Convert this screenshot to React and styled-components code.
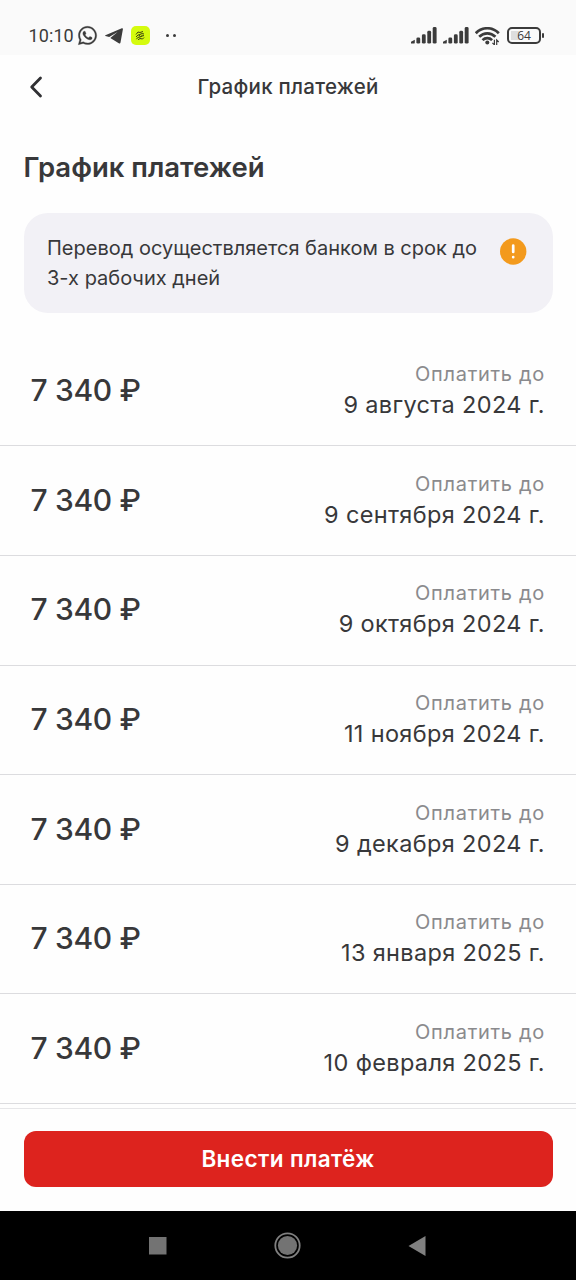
import React from 'react';
import styled, { createGlobalStyle } from 'styled-components';
import { FaWhatsapp } from 'react-icons/fa';

const payments = [
    { amount: '7 340 ₽', date: '9 августа 2024 г.' },
    { amount: '7 340 ₽', date: '9 сентября 2024 г.' },
    { amount: '7 340 ₽', date: '9 октября 2024 г.' },
    { amount: '7 340 ₽', date: '11 ноября 2024 г.' },
    { amount: '7 340 ₽', date: '9 декабря 2024 г.' },
    { amount: '7 340 ₽', date: '13 января 2025 г.' },
    { amount: '7 340 ₽', date: '10 февраля 2025 г.' },
]

const SignalIcon = () => (
    <svg width="26" height="17" viewBox="0 0 26 17" fill="#3b3b3b">
        <path d="M0 16.600v-1.800l3.800-2v2.600q0 1.200-1.200 1.200z" />
        <rect x="5.400" y="10.400" width="3.800" height="6.200" rx="1.400" />
        <rect x="10.900" y="7.300" width="3.800" height="9.300" rx="1.400" />
        <rect x="16.300" y="3.800" width="3.800" height="12.800" rx="1.400" />
        <rect x="21.700" y="0" width="3.900" height="16.600" rx="1.400" />
    </svg>
)

const WifiIcon = () => (
    <svg width="25" height="18" viewBox="0 0 25 18" fill="none" stroke="#3b3b3b" strokeWidth="2.700">
        <path d="M.8 6.200C7.300 -.4 17.300 -.4 23.800 6.200" />
        <path d="M4.200 9.800C8.900 5.200 15.700 5.200 20.400 9.800" />
        <path d="M7.500 13.100c2.700-2.600 6.900-2.600 9.600 0" />
        <circle cx="12.300" cy="15.500" r="2" fill="#3b3b3b" stroke="none" />
        <path d="M19.400 12.800v5l-2-2M21.700 18v-5l2 2" strokeWidth="1.200" />
    </svg>
)

const App = () => {
    return (
        <Screen>
            <GlobalStyle />
            <StatusBar>
                <Clock>10:10</Clock>
                <FaWhatsapp size={21} stroke="#3b3b3b" strokeWidth={8} />
                <PlaneIcon width="18" height="16" viewBox="0 0 18 16" fill="#3b3b3b">
                    <path d="M.4 7.200 16.800.3c.8-.3 1.300.1 1.100 1L15.500 14.600c-.2 1-.9 1.200-1.700.7L5.300 10.100 12.600 4 4.200 9 .4 8c-.4-.2-.4-.6 0-.8z" />
                </PlaneIcon>
                <AppBadge>
                    <svg width="10" height="11" viewBox="0 0 10 11" fill="none" stroke="#3f4612" strokeWidth="1">
                        <path d="M1 4.500 3 2l2 .5L8 1.500M1 7l2-2 2-.5 1.500-1L9 4M6 4.500 7.500 6 9 5.500M1.500 9.200l1.200-1.700L5 7l2.500-1M3 9.800l2-1.300L7.500 9 9 7.500M4 5l1.500 2" />
                    </svg>
                </AppBadge>
                <Dots><Dot /><Dot /></Dots>
                <StatusRight>
                    <SignalIcon />
                    <SignalIcon />
                    <WifiIcon />
                    <Battery>
                        <BatteryBody><BatteryFill /><BatteryText>64</BatteryText></BatteryBody>
                        <BatteryTip />
                    </Battery>
                </StatusRight>
            </StatusBar>

            <Header>
                <BackButton>
                    <svg width="14" height="22" viewBox="0 0 14 22" fill="none" stroke="#303033" strokeWidth="2.800" strokeLinecap="round" strokeLinejoin="round">
                        <path d="M11.500 2 2.700 11 11.500 20" />
                    </svg>
                </BackButton>
                <HeaderTitle>График платежей</HeaderTitle>
            </Header>

            <Title>График платежей</Title>

            <Notice>
                <NoticeText>
                    Перевод осуществляется банком в срок до<br />3-х рабочих дней
                </NoticeText>
                <svg width="27" height="27" viewBox="0 0 27 27">
                    <circle cx="13.200" cy="13.500" r="13.200" fill="#f39a1d" />
                    <path d="M13.200 7.500v6.500M13.200 19.100v.1" stroke="#fff" strokeWidth="2.700" strokeLinecap="round" />
                </svg>
            </Notice>

            <List>
                {payments.map((item) => (
                    <Row key={item.date}>
                        <Amount>{item.amount}</Amount>
                        <Due>
                            <DueLabel>Оплатить до</DueLabel>
                            <DueDate>{item.date}</DueDate>
                        </Due>
                    </Row>
                ))}
            </List>

            <Footer>
                <PayButton>Внести платёж</PayButton>
            </Footer>

            <NavBar>
                <svg width="18" height="18"><rect width="17.500" height="17.500" fill="#737373" /></svg>
                <svg width="27" height="27" viewBox="0 0 27 27">
                    <circle cx="13.500" cy="13.500" r="12.200" fill="none" stroke="#808080" strokeWidth="1.800" />
                    <circle cx="13.500" cy="13.500" r="9.600" fill="#737373" />
                </svg>
                <svg width="18" height="20" viewBox="0 0 18 20"><path d="M.5 10 17.500 0v20z" fill="#808080" /></svg>
            </NavBar>
        </Screen>
    )
}

const GlobalStyle = createGlobalStyle`
    * {
        box-sizing: border-box;
    }

    body {
        margin: 0;
        background: #fff;
    }

    svg {
        display: block;
        flex-shrink: 0;
    }
`

const Screen = styled.div`
    display: flex;
    flex-direction: column;
    width: 576px;
    height: 1280px;
    overflow: hidden;
    background: #fefefe;
    color: #38383a;
    font-family: Inter, 'Noto Sans', sans-serif;
`

const StatusBar = styled.div`
    display: flex;
    align-items: center;
    height: 55px;
    padding: 16px 32px 0 28.5px;
    background: #fafafa;
    color: #3b3b3b;
`

const Clock = styled.span`
    width: 48px;
    font: 400 18px/20px Roboto, sans-serif;
    letter-spacing: 0.1px;
`

const PlaneIcon = styled.svg`
    margin-left: 7.5px;
`

const AppBadge = styled.div`
    display: flex;
    align-items: center;
    justify-content: center;
    width: 19px;
    height: 19px;
    margin-left: 7.5px;
    border-radius: 5px;
    background: #d5fb0e;
`

const Dots = styled.div`
    display: flex;
    gap: 4px;
    margin-left: 16px;
`

const Dot = styled.span`
    width: 3px;
    height: 3px;
    border-radius: 50%;
    background: #3b3b3b;
`

const StatusRight = styled.div`
    display: flex;
    align-items: center;
    gap: 6px;
    margin-left: auto;
`

const Battery = styled.div`
    display: flex;
    align-items: center;
    gap: 1px;
    margin-left: 1px;
`

const BatteryBody = styled.div`
    display: flex;
    position: relative;
    align-items: center;
    justify-content: center;
    width: 34px;
    height: 17px;
    border: 2px solid #3b3b3b;
    border-radius: 5px;
`

const BatteryFill = styled.span`
    position: absolute;
    top: 2px;
    left: 2px;
    width: 8px;
    height: 9px;
    background: #dedede;
`

const BatteryText = styled.span`
    position: relative;
    font: 400 12px/13px 'Open Sans', sans-serif;
`

const BatteryTip = styled.span`
    width: 2px;
    height: 5px;
    border-radius: 1px;
    background: #3b3b3b;
`

const Header = styled.header`
    display: grid;
    grid-template-columns: 40px 1fr 40px;
    align-items: center;
    height: 65px;
    padding: 0 28px;
`

const BackButton = styled.button`
    display: flex;
    padding: 0 0 0 1px;
    margin-top: -1px;
    border: none;
    background: transparent;
    cursor: pointer;
`

const HeaderTitle = styled.span`
    margin-top: -2px;
    font-size: 20.5px;
    font-weight: 500;
    line-height: 24px;
    letter-spacing: 0.27px;
    text-align: center;
`

const Title = styled.h1`
    margin: 29px 0 0 23.5px;
    font-size: 27.5px;
    font-weight: 600;
    line-height: 36px;
    letter-spacing: 0;
`

const Notice = styled.div`
    display: flex;
    justify-content: space-between;
    height: 100px;
    margin: 28px 23.5px 0;
    padding: 25px 25.5px 0 23.5px;
    border-radius: 24px;
    background: #f2f1f6;
`

const NoticeText = styled.p`
    margin: -5px 0 0;
    font-size: 20px;
    line-height: 30px;
    white-space: nowrap;
`

const List = styled.div`
    flex: 1;
    margin-top: 23.9px;
    overflow: hidden;
`

const Row = styled.div`
    display: flex;
    align-items: center;
    justify-content: space-between;
    height: 109.6px;
    padding: 0 31px 0 30.5px;
    border-bottom: 1px solid #dcdcdf;
`

const Amount = styled.span`
    margin-top: -2px;
    font-size: 30px;
    font-weight: 500;
    line-height: 36px;
    letter-spacing: -0.35px;
`

const Due = styled.div`
    display: flex;
    flex-direction: column;
    align-items: flex-end;
`

const DueLabel = styled.span`
    color: #8a8a8d;
    font-size: 20px;
    line-height: 28px;
    letter-spacing: 0.7px;
`

const DueDate = styled.span`
    font-size: 23.5px;
    line-height: 34px;
    letter-spacing: 0.35px;
`

const Footer = styled.div`
    height: 103px;
    padding: 22px 23.5px 0;
    border-top: 1px solid #e6e6e8;
`

const PayButton = styled.button`
    display: block;
    width: 100%;
    height: 56px;
    padding: 0;
    border: none;
    border-radius: 12px;
    background: #dd231e;
    color: #fff;
    cursor: pointer;
    font-family: inherit;
    font-size: 22.5px;
    font-weight: 600;
    line-height: 54px;
    letter-spacing: 0.38px;
`

const NavBar = styled.div`
    display: flex;
    align-items: center;
    justify-content: space-between;
    height: 69px;
    padding: 0 150px 0 149px;
    background: #000;
`

export default App;
